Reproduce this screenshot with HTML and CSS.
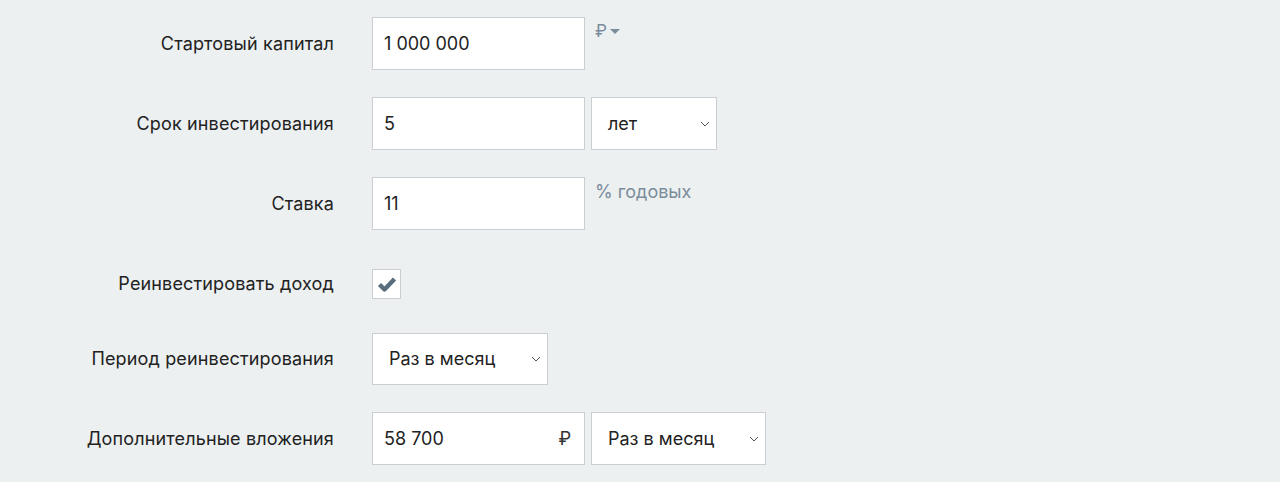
FILE: index.html
```html
<!DOCTYPE html>
<html lang="ru">
<head>
  <meta charset="UTF-8">
  <meta name="viewport" content="width=device-width, initial-scale=1.0">
  <title>Калькулятор вкладов</title>
  <link rel="stylesheet" href="styles.css">
</head>
<body>
  <form class="calc">
    <div class="row">
      <label class="label">Стартовый капитал</label>
      <div class="field">
        <div class="input"><span>1 000 000</span></div>
        <div class="suffix currency">₽ <span class="caret"></span></div>
      </div>
    </div>

    <div class="row">
      <label class="label">Срок инвестирования</label>
      <div class="field">
        <div class="input"><span>5</span></div>
        <div class="select select-short">
          <span>лет</span>
          <svg class="chevron" width="10" height="6" viewBox="0 0 10 6"><path d="M1 1l4 4 4-4" fill="none" stroke="#555" stroke-width="1"/></svg>
        </div>
      </div>
    </div>

    <div class="row">
      <label class="label">Ставка</label>
      <div class="field">
        <div class="input"><span>11</span></div>
        <div class="suffix">% годовых</div>
      </div>
    </div>

    <div class="row row-check">
      <label class="label">Реинвестировать доход</label>
      <div class="field">
        <div class="checkbox">
          <svg width="20" height="16" viewBox="0 0 20 16"><path d="M2.5 8.5l5 5L17.5 3" fill="none" stroke="#5a6d7d" stroke-width="4.4" stroke-linejoin="round" stroke-linecap="butt"/></svg>
        </div>
      </div>
    </div>

    <div class="row">
      <label class="label">Период реинвестирования</label>
      <div class="field">
        <div class="select select-mid">
          <span>Раз в месяц</span>
          <svg class="chevron" width="10" height="6" viewBox="0 0 10 6"><path d="M1 1l4 4 4-4" fill="none" stroke="#555" stroke-width="1"/></svg>
        </div>
      </div>
    </div>

    <div class="row">
      <label class="label">Дополнительные вложения</label>
      <div class="field">
        <div class="input input-rub"><span>58 700</span><span class="rub">₽</span></div>
        <div class="select select-long">
          <span>Раз в месяц</span>
          <svg class="chevron" width="10" height="6" viewBox="0 0 10 6"><path d="M1 1l4 4 4-4" fill="none" stroke="#555" stroke-width="1"/></svg>
        </div>
      </div>
    </div>
  </form>
</body>
</html>
```

FILE: styles.css
```css
* {
  margin: 0;
  padding: 0;
  box-sizing: border-box;
}

body {
  background-color: #ecf0f1;
  font-family: 'Inter', 'Liberation Sans', Arial, sans-serif;
  font-size: 18px;
  color: #222;
}

.calc {
  padding-top: 17px;
  display: flex;
  flex-direction: column;
  gap: 27px;
}

.row {
  display: grid;
  grid-template-columns: 334px auto;
  column-gap: 38px;
  align-items: start;
}

.label {
  height: 53px;
  line-height: 53px;
  text-align: right;
  letter-spacing: 0.15px;
  color: #222;
}

.field {
  display: flex;
  gap: 6px;
  align-items: flex-start;
}

.input,
.select {
  height: 53px;
  background-color: #fff;
  border: 1px solid #c9cfd3;
  display: flex;
  align-items: center;
}

.input {
  width: 213px;
  padding: 0 11px;
}

.input-rub {
  justify-content: space-between;
  padding-right: 13px;
}

.rub {
  color: #333;
}

.select {
  justify-content: space-between;
  padding: 0 6px 0 16px;
}

.select-short {
  width: 126px;
}

.select-mid {
  width: 176px;
}

.select-long {
  width: 175px;
}

.suffix {
  padding-top: 4px;
  padding-left: 4px;
  color: #7b8c9b;
  font-size: 18px;
}

.currency {
  display: flex;
  align-items: center;
  gap: 3px;
  padding-top: 4px;
  font-size: 17px;
}

.caret {
  width: 0;
  height: 0;
  border-left: 5px solid transparent;
  border-right: 5px solid transparent;
  border-top: 5px solid #7b8c9b;
}

.row-check .label {
  height: 29px;
  line-height: 29px;
  margin-top: 12px;
}

.row-check .field {
  margin-top: 12px;
  margin-bottom: 7px;
}

.checkbox {
  width: 29px;
  height: 30px;
  background-color: #fff;
  border: 1px solid #c9cfd3;
  display: flex;
  align-items: center;
  justify-content: center;
}

.select-mid,
.row-check + .row .label {
  height: 52px;
  line-height: 52px;
}
```
